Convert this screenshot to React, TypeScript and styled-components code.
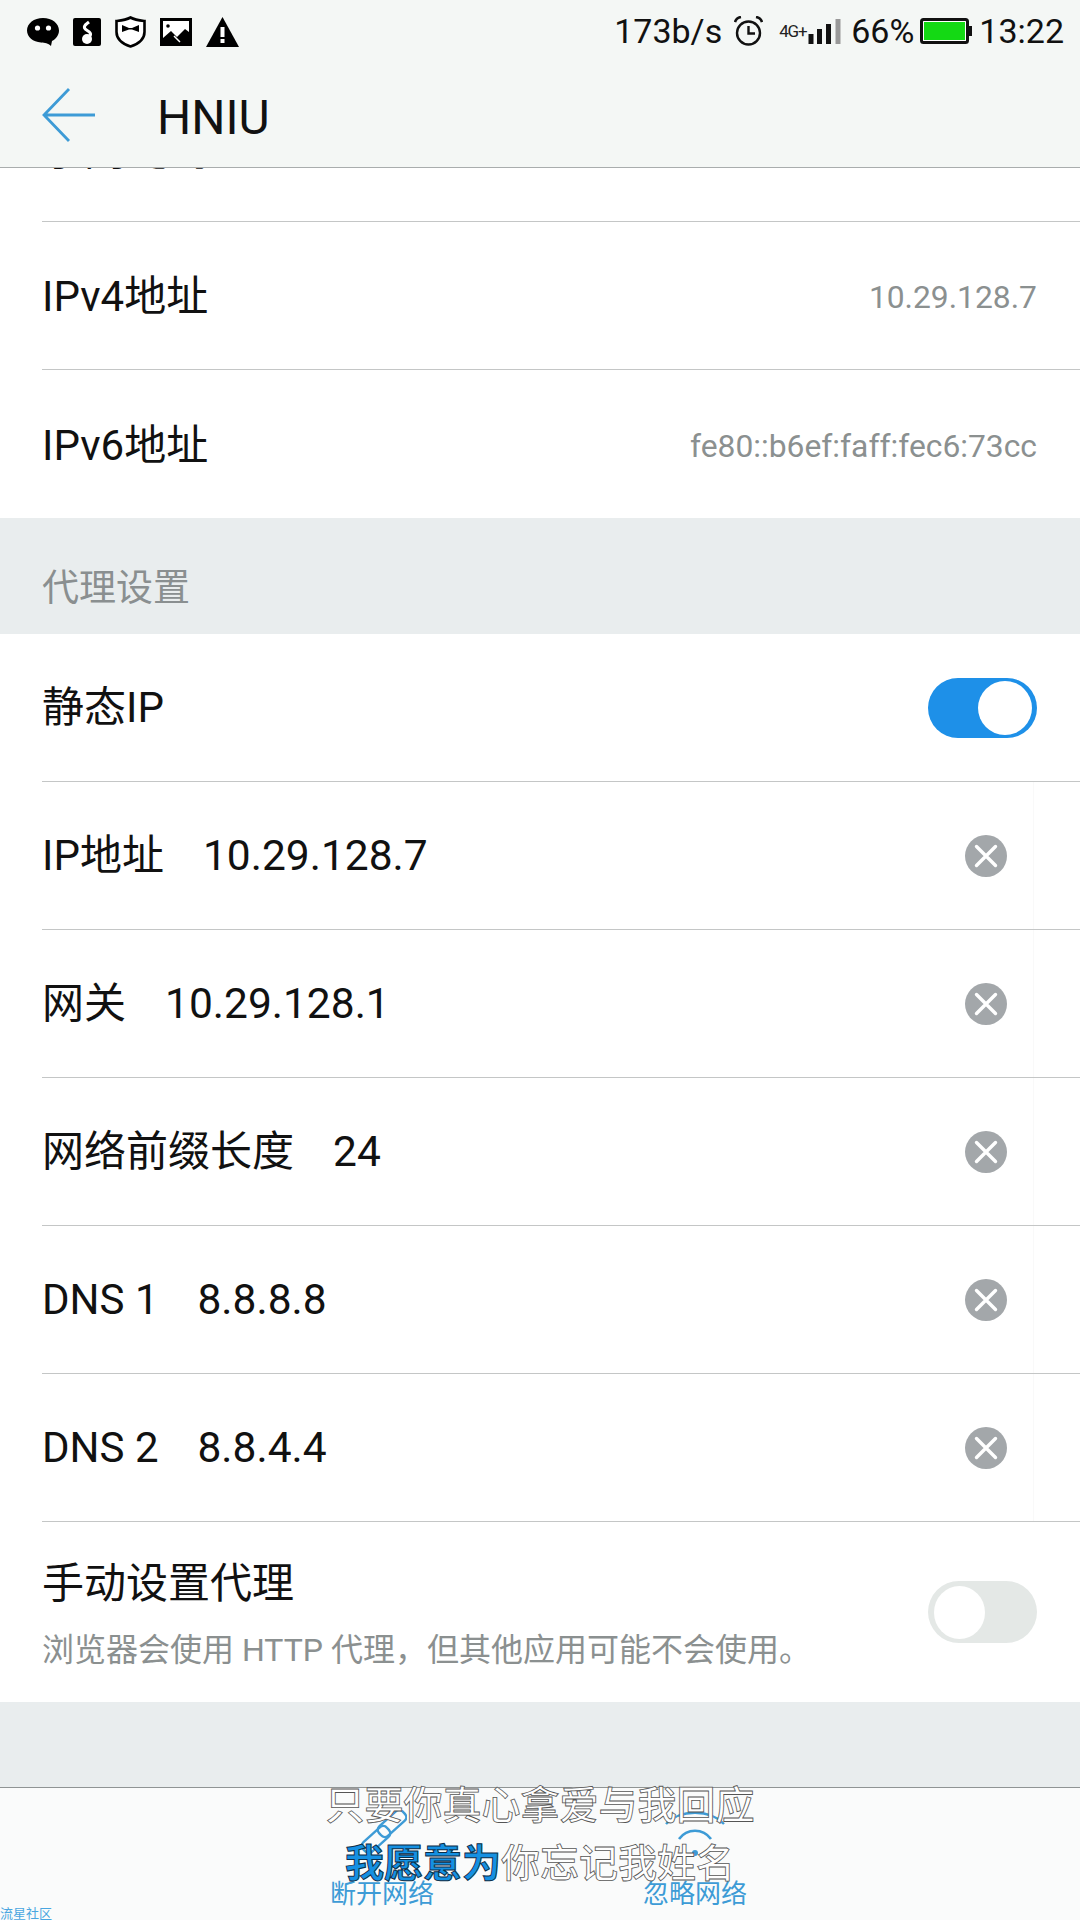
import React from "react";
import styled, { createGlobalStyle } from "styled-components";

const FONT = `Roboto, "Noto Sans CJK SC", "Noto Sans", sans-serif`;

const Global = createGlobalStyle`
  html, body { margin: 0; padding: 0; background: #fff; }
  * { box-sizing: border-box; }
`;

const Page = styled.div`
  position: relative;
  width: 1080px;
  height: 1920px;
  display: flex;
  flex-direction: column;
  overflow: hidden;
  background: #e9edee;
  font-family: ${FONT};
  color: #111;
`;

const Header = styled.header`
  height: 168px;
  flex: none;
  background: #f4f7f5;
  border-bottom: 1px solid #a9adad;
  display: flex;
  flex-direction: column;
`;

const StatusBar = styled.div`
  height: 60px;
  padding: 0 16px 0 27px;
  display: flex;
  align-items: center;
  justify-content: space-between;
`;

const StatusGroup = styled.div`
  display: flex;
  align-items: center;
  gap: 14px;
  margin-top: 4px;
`;

const StatusRight = styled.div`
  display: flex;
  align-items: center;
  margin-top: 2px;
`;

const StatusText = styled.span<{ $ml?: number }>`
  font-size: 34px;
  line-height: 40px;
  color: #111;
  margin-left: ${(p) => p.$ml ?? 0}px;
`;

const Slot = styled.span<{ $ml?: number }>`
  display: flex;
  align-items: flex-end;
  margin-left: ${(p) => p.$ml ?? 0}px;
`;

const NetType = styled.span`
  font-size: 17px;
  line-height: 16px;
  margin-bottom: 5px;
  margin-right: 1px;
  width: 28px;
  letter-spacing: -1.2px;
  white-space: nowrap;
  color: #222;
`;

const TitleBar = styled.div`
  flex: 1;
  display: flex;
  align-items: center;
  padding-left: 42px;
  padding-top: 2px;
`;

const Title = styled.h1`
  margin: 6px 0 0 61px;
  font-size: 48px;
  font-weight: 400;
  line-height: 56px;
  color: #111;
`;

const List = styled.section`
  background: #fff;
  flex: none;
`;

const ClippedRow = styled.div`
  height: 54px;
  margin-left: 42px;
  border-bottom: 1px solid #c4c6c6;
  overflow: hidden;
  display: flex;
  align-items: flex-end;
`;

const ClippedText = styled.div`
  font-size: 42px;
  line-height: 46px;
  margin-bottom: 47px;
`;

const Row = styled.div<{ $h?: number; $last?: boolean; $pt?: number }>`
  height: ${(p) => p.$h ?? 148}px;
  margin-left: 42px;
  padding-top: ${(p) => p.$pt ?? 0}px;
  display: flex;
  align-items: center;
  justify-content: space-between;
  border-bottom: ${(p) => (p.$last ? "none" : "1px solid #c4c6c6")};
`;

const Label = styled.span`
  font-size: 42px;
  line-height: 50px;
  color: #111;
`;

const Value = styled.span`
  font-size: 31.8px;
  color: #8b9090;
  margin-right: 43px;
`;

const Field = styled.div`
  display: flex;
  align-items: center;
  gap: 39px;
`;

const FieldValue = styled.span`
  font-size: 42.5px;
  line-height: 50px;
  color: #111;
`;

const Trailing = styled.div`
  height: 100%;
  width: 47px;
  margin-left: 26px;
  border-left: 1px solid #f9f9f9;
`;

const RowEnd = styled.div`
  height: 100%;
  display: flex;
  align-items: center;
`;

const ClearButton = styled.button`
  width: 42px;
  height: 42px;
  padding: 0;
  border: none;
  border-radius: 50%;
  background: #a3a7aa;
  display: flex;
  align-items: center;
  justify-content: center;
`;

const Section = styled.div`
  height: 116px;
  flex: none;
  display: flex;
  align-items: flex-end;
  padding: 0 0 16px 42px;
  font-size: 37px;
  line-height: 58px;
  color: #8a8f90;
  background: #e9edee;
`;

const Track = styled.div<{ $on: boolean }>`
  position: relative;
  width: 109px;
  height: ${(p) => (p.$on ? 60 : 62)}px;
  border-radius: 31px;
  background: ${(p) => (p.$on ? "#1e90e8" : "#e4e8e6")};
  margin-right: 43px;
`;

const Knob = styled.div<{ $on: boolean }>`
  position: absolute;
  top: ${(p) => (p.$on ? 3 : 5)}px;
  left: ${(p) => (p.$on ? 50 : 6)}px;
  width: ${(p) => (p.$on ? 54 : 51)}px;
  height: ${(p) => (p.$on ? 54 : 53)}px;
  border-radius: 50%;
  background: #fff;
`;

const Stack = styled.div`
  display: flex;
  flex-direction: column;
  padding-top: 3px;
`;

const Hint = styled.span`
  font-size: 32px;
  line-height: 36px;
  margin-top: 23px;
  color: #8b9090;
`;

const Spacer = styled.div`
  height: 85px;
  flex: none;
  background: #e9edee;
`;

const BottomBar = styled.footer`
  flex: 1;
  display: flex;
  align-items: flex-end;
  gap: 211px;
  padding: 0 0 12px 331px;
  background: #fafbfb;
  border-top: 1px solid #8f9494;
`;

const Action = styled.div`
  display: flex;
  flex-direction: column;
  align-items: center;
  width: 102px;
  gap: 18px;
`;

const ActionLabel = styled.span`
  font-size: 26px;
  line-height: 28px;
  color: #3d9bd6;
  white-space: nowrap;
`;

const Subtitle = styled.div`
  position: absolute;
  left: 0;
  right: 0;
  top: 1784px;
  display: flex;
  flex-direction: column;
  align-items: center;
  gap: 14px;
  font-size: 39px;
  line-height: 44px;
  font-weight: 500;
  white-space: nowrap;
  color: #fff;
  -webkit-text-stroke: 0.8px #555;
`;

const Sung = styled.span`
  color: #1590e2;
  font-weight: 700;
  -webkit-text-stroke: 1px #0b2f4a;
`;

const Watermark = styled.span`
  position: absolute;
  left: 0;
  bottom: -1px;
  font-size: 13px;
  line-height: 14px;
  color: #4aa6e0;
`;

const ClearIcon = () => (
  <svg width="24" height="24" viewBox="0 0 24 24">
    <path d="M2.500 2.500 L21.500 21.500 M21.500 2.500 L2.500 21.500" stroke="#fff" strokeWidth="3.400" strokeLinecap="round" />
  </svg>
);

const WeChatIcon = () => (
  <svg width="32" height="28" viewBox="0 0 32 28">
    <path d="M16 0C7 0 0 5.400 0 12.500 C0 19 6 24 14 24.500 C18 25 21 25 24 28 L25 23 C29 21 32 17 32 12.500 C32 5.400 25 0 16 0Z" fill="#000" />
    <circle cx="10.500" cy="10" r="2.600" fill="#fff" />
    <circle cx="21.500" cy="10" r="2.600" fill="#fff" />
  </svg>
);

const MusicIcon = () => (
  <svg width="28" height="28" viewBox="0 0 28 28">
    <rect width="28" height="28" rx="2" fill="#000" />
    <path d="M16 4 C13.500 6 10.500 7 11.500 10 C12.500 13 18.500 13 17.500 17 C17 19 15.500 20 14 21" fill="none" stroke="#fff" strokeWidth="3" />
    <circle cx="14" cy="21" r="5" fill="#fff" />
  </svg>
);

const ShieldIcon = () => (
  <svg width="31" height="32" viewBox="0 0 31 32">
    <path d="M15.500 1.500 C20 4 25 4.500 29.500 5 L29.500 16 C29.500 23 23 28 15.500 30.500 C8 28 1.500 23 1.500 16 L1.500 5 C6 4.500 11 4 15.500 1.500Z" fill="#fff" stroke="#000" strokeWidth="2.600" />
    <path d="M7 9 L14 12 L17 12 L24 9 L24 16 L17 13.500 L14 13.500 L7 16Z" fill="#000" />
  </svg>
);

const ImageIcon = () => (
  <svg width="32" height="28" viewBox="0 0 32 28">
    <rect width="32" height="28" fill="#000" />
    <rect x="3" y="3" width="26" height="22" fill="#fff" />
    <circle cx="8" cy="8" r="1.800" fill="#000" />
    <path d="M3 25 L3 20 L11 13 L17 19 L25 11 L29 14 L29 25Z" fill="#000" />
    <path d="M14 18 L20 24" stroke="#fff" strokeWidth="1.500" />
  </svg>
);

const WarningIcon = () => (
  <svg width="33" height="30" viewBox="0 0 33 30">
    <path d="M16.500 0 L33 30 L0 30Z" fill="#000" />
    <rect x="14.500" y="10" width="4" height="10" fill="#fff" />
    <rect x="14.500" y="22" width="4" height="4" fill="#fff" />
  </svg>
);

const AlarmIcon = () => (
  <svg width="29" height="30" viewBox="0 0 29 30">
    <circle cx="14.500" cy="17" r="11.500" fill="none" stroke="#111" strokeWidth="2.400" />
    <path d="M14.500 10 L14.500 17.500 L21 17.500" fill="none" stroke="#111" strokeWidth="2.400" />
    <path d="M1 6 C2 3 4 1.500 7 1 M28 6 C27 3 25 1.500 22 1" fill="none" stroke="#111" strokeWidth="2.600" />
  </svg>
);

const SignalIcon = () => (
  <svg width="33" height="25" viewBox="0 0 33 25">
    <rect x="0.500" y="15" width="5" height="10" fill="#111" />
    <rect x="9" y="10" width="5" height="15" fill="#111" />
    <rect x="18" y="5" width="5" height="20" fill="#111" />
    <rect x="27.500" y="0" width="5" height="25" fill="#999" />
  </svg>
);

const BatteryIcon = () => (
  <svg width="52" height="26" viewBox="0 0 52 26">
    <rect x="1.500" y="1.500" width="46" height="23" rx="2" fill="#fff" stroke="#111" strokeWidth="3" />
    <rect x="4" y="4" width="41" height="18" fill="#14d914" />
    <rect x="49" y="8" width="3" height="10" fill="#111" />
  </svg>
);

const BackArrow = () => (
  <svg width="54" height="54" viewBox="0 0 54 54">
    <path d="M27 1 L2 27 L27 53 M2 27 L53 27" fill="none" stroke="#3d9bd6" strokeWidth="2.800" />
  </svg>
);

const LinkIcon = () => (
  <svg width="50" height="52" viewBox="0 0 50 52">
    <g fill="none" stroke="#3d9bd6" strokeWidth="2.400">
      <rect x="19" y="7" width="32" height="13" rx="5" transform="rotate(-42 35 13.500)" />
      <rect x="3" y="23" width="32" height="13" rx="5" transform="rotate(-42 19 29.500)" />
    </g>
  </svg>
);

const ForgetIcon = () => (
  <svg width="60" height="52" viewBox="0 0 60 52">
    <path d="M1 14 C15 -1 45 -1 59 14" fill="none" stroke="#3d9bd6" strokeWidth="2.400" />
    <path d="M14 29 C22 18 38 18 46 29" fill="none" stroke="#3d9bd6" strokeWidth="2.600" />
    <circle cx="30" cy="43" r="3" fill="#3d9bd6" />
  </svg>
);

const EditRow = ({ label, value, last }: { label: string; value: string; last?: boolean }) => (
  <Row $last={last}>
    <Field>
      <Label>{label}</Label>
      <FieldValue>{value}</FieldValue>
    </Field>
    <RowEnd>
      <ClearButton aria-label="clear">
        <ClearIcon />
      </ClearButton>
      <Trailing />
    </RowEnd>
  </Row>
);

const Switch = ({ on }: { on: boolean }) => (
  <Track $on={on}>
    <Knob $on={on} />
  </Track>
);

export default function App() {
  return (
    <>
      <Global />
      <Page>
        <Header>
          <StatusBar>
            <StatusGroup>
              <WeChatIcon />
              <MusicIcon />
              <ShieldIcon />
              <ImageIcon />
              <WarningIcon />
            </StatusGroup>
            <StatusRight>
              <StatusText>173b/s</StatusText>
              <Slot $ml={12}>
                <AlarmIcon />
              </Slot>
              <Slot $ml={16}>
                <NetType>4G+</NetType>
                <SignalIcon />
              </Slot>
              <StatusText $ml={10}>66%</StatusText>
              <Slot $ml={6}>
                <BatteryIcon />
              </Slot>
              <StatusText $ml={7}>13:22</StatusText>
            </StatusRight>
          </StatusBar>
          <TitleBar>
            <BackArrow />
            <Title>HNIU</Title>
          </TitleBar>
        </Header>
        <List>
          <ClippedRow>
            <ClippedText>子网掩码</ClippedText>
          </ClippedRow>
          <Row $pt={3}>
            <Label>IPv4地址</Label>
            <Value>10.29.128.7</Value>
          </Row>
          <Row $last $pt={3}>
            <Label>IPv6地址</Label>
            <Value>fe80::b6ef:faff:fec6:73cc</Value>
          </Row>
        </List>
        <Section>代理设置</Section>
        <List>
          <Row>
            <Label>静态IP</Label>
            <Switch on />
          </Row>
          <EditRow label="IP地址" value="10.29.128.7" />
          <EditRow label="网关" value="10.29.128.1" />
          <EditRow label="网络前缀长度" value="24" />
          <EditRow label="DNS 1" value="8.8.8.8" />
          <EditRow label="DNS 2" value="8.8.4.4" />
          <Row $h={180} $last>
            <Stack>
              <Label>手动设置代理</Label>
              <Hint>浏览器会使用 HTTP 代理，但其他应用可能不会使用。</Hint>
            </Stack>
            <Switch on={false} />
          </Row>
        </List>
        <Spacer />
        <BottomBar>
          <Action>
            <LinkIcon />
            <ActionLabel>断开网络</ActionLabel>
          </Action>
          <Action>
            <ForgetIcon />
            <ActionLabel>忽略网络</ActionLabel>
          </Action>
        </BottomBar>
        <Subtitle>
          <span>只要你真心拿爱与我回应</span>
          <span>
            <Sung>我愿意为</Sung>你忘记我姓名
          </span>
        </Subtitle>
        <Watermark>流星社区</Watermark>
      </Page>
    </>
  );
}
